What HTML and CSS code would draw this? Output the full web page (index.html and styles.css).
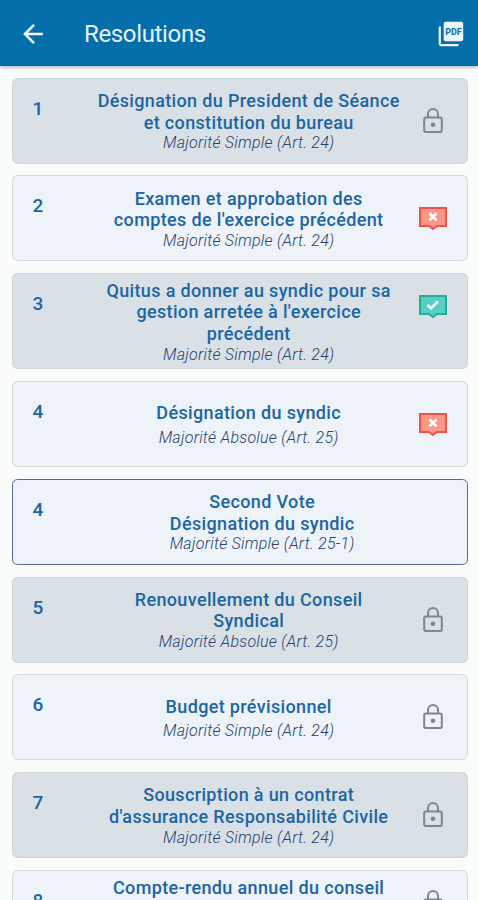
FILE: index.html
```html
<!DOCTYPE html>
<html lang="fr">
<head>
<meta charset="utf-8">
<title>Resolutions</title>
<link rel="stylesheet" href="styles.css">
</head>
<body>
<svg class="defs" aria-hidden="true">
  <symbol id="lock" viewBox="0 0 28 28">
    <rect x="5.2" y="10.4" width="17.6" height="14.6" rx="1.8" fill="none" stroke="#80878a" stroke-width="2"/>
    <path d="M9 10.400V7a5 5 0 0 1 10 0v3.400" fill="none" stroke="#80878a" stroke-width="2"/>
    <circle cx="14" cy="17.800" r="2.300" fill="#80878a"/>
  </symbol>
  <symbol id="no" viewBox="0 0 28 28">
    <path d="M0 3h28v20h-9.800L14 26.200l-4.200-3.200H0z" fill="#f4504d"/>
    <path d="M2 5h24v16h-8.500L14 23.700 10.500 21H2z" fill="#fc9785"/>
    <path d="M10.400 9.200l7.200 7.200m0-7.200l-7.200 7.200" stroke="#fff" stroke-width="2.700"/>
  </symbol>
  <symbol id="yes" viewBox="0 0 28 28">
    <path d="M0 3h28v20h-9.800L14 26.200l-4.200-3.200H0z" fill="#2aa995"/>
    <path d="M2 5h24v16h-8.500L14 23.700 10.500 21H2z" fill="#55d1c3"/>
    <path d="M8.600 13l3.500 3.300 6.900-6.900" fill="none" stroke="#fff" stroke-width="2.600"/>
  </symbol>
</svg>
<header class="bar">
  <svg class="back" viewBox="0 0 22 22"><path d="M20.800 11H3M12 1.900L2.900 11l9.100 9.100" fill="none" stroke="#f4fbff" stroke-width="2.500"/></svg>
  <h1>Resolutions</h1>
  <svg class="pdf" viewBox="0 0 26 26">
    <path d="M1.800 5.500v16.700a2 2 0 0 0 2 2h16.700" fill="none" stroke="#edf6fc" stroke-width="2.200"/>
    <rect x="5.700" y="0.800" width="19.500" height="19.500" rx="2" fill="#edf6fc"/>
    <text x="15.500" y="13.800" text-anchor="middle" textLength="16.500" lengthAdjust="spacingAndGlyphs">PDF</text>
  </svg>
</header>
<main class="list">
  <article class="card dark"><span class="num">1</span><div class="text"><h2>Désignation du President de Séance<br>et constitution du bureau</h2><p>Majorité Simple (Art. 24)</p></div><svg class="icon"><use href="#lock"/></svg></article>
  <article class="card"><span class="num">2</span><div class="text"><h2>Examen et approbation des<br>comptes de l'exercice précédent</h2><p>Majorité Simple (Art. 24)</p></div><svg class="icon"><use href="#no"/></svg></article>
  <article class="card dark tall"><span class="num">3</span><div class="text"><h2>Quitus a donner au syndic pour sa<br>gestion arretée à l'exercice<br>précédent</h2><p>Majorité Simple (Art. 24)</p></div><svg class="icon"><use href="#yes"/></svg></article>
  <article class="card single"><span class="num">4</span><div class="text"><h2>Désignation du syndic</h2><p>Majorité Absolue (Art. 25)</p></div><svg class="icon"><use href="#no"/></svg></article>
  <article class="card active"><span class="num">4</span><div class="text"><h2>Second Vote<br>Désignation du syndic</h2><p>Majorité Simple (Art. 25-1)</p></div></article>
  <article class="card dark"><span class="num">5</span><div class="text"><h2>Renouvellement du Conseil<br>Syndical</h2><p>Majorité Absolue (Art. 25)</p></div><svg class="icon"><use href="#lock"/></svg></article>
  <article class="card single"><span class="num">6</span><div class="text"><h2>Budget prévisionnel</h2><p>Majorité Simple (Art. 24)</p></div><svg class="icon"><use href="#lock"/></svg></article>
  <article class="card dark"><span class="num">7</span><div class="text"><h2>Souscription à un contrat<br>d'assurance Responsabilité Civile</h2><p>Majorité Simple (Art. 24)</p></div><svg class="icon"><use href="#lock"/></svg></article>
  <article class="card tall last"><span class="num">8</span><div class="text"><h2>Compte-rendu annuel du conseil</h2></div><svg class="icon"><use href="#lock"/></svg></article>
</main>
</body>
</html>
```
FILE: styles.css
```css
* { box-sizing: border-box; }
body {
  margin: 0;
  height: 900px;
  overflow: hidden;
  background: #fbfcfc;
  font-family: Roboto, "Liberation Sans", sans-serif;
}
h1, h2, p { margin: 0; }
.defs { display: none; }
.bar {
  height: 66px;
  display: flex;
  align-items: center;
  padding: 1px 14px 0 22px;
  background: #046eaa;
  box-shadow: 0 1px 4px rgba(0, 0, 0, .35);
}
.back { width: 22px; height: 22px; }
.bar h1 {
  flex: 1;
  margin-left: 40px;
  padding-top: 1px;
  font-size: 24px;
  font-weight: 400;
  letter-spacing: -.35px;
  color: #e2f1fb;
}
.pdf { width: 26px; height: 26px; }
.pdf text { font: 800 9px Roboto, sans-serif; fill: #1774ae; }
.list {
  height: 834px;
  overflow: hidden;
  display: flex;
  flex-direction: column;
  gap: 11.700px;
  padding: 11.700px 10.500px 0 11.800px;
}
.card {
  flex: none;
  height: 86px;
  display: flex;
  align-items: center;
  border: 1.500px solid #d5dbdc;
  border-radius: 5.500px;
  background: #edf3f9;
}
.card.dark { background: #d9e1e6; border-color: #ced7d9; }
.card.active { border-color: #536b91; }
.card.tall { height: 96.400px; }
.num {
  align-self: flex-start;
  width: 50px;
  padding-top: 19px;
  font-size: 19px;
  line-height: 22px;
  font-weight: 500;
  text-align: center;
  color: #1c65a5;
}
.text {
  flex: 1;
  padding: 1.400px 0 0 22px;
  text-align: center;
  white-space: nowrap;
}
.text h2 {
  font-size: 18px;
  line-height: 21.700px;
  font-weight: 500;
  letter-spacing: .35px;
  color: #1c65a5;
}
.text p {
  font-size: 16px;
  line-height: 19.500px;
  font-style: italic;
  font-weight: 300;
  letter-spacing: .25px;
  color: #283f70;
}
.single p { margin-top: 3.500px; }
.active .text { padding-right: 27px; }
.icon {
  width: 28px;
  height: 28px;
  margin: 0 20px 0 6px;
}
.tall .icon { align-self: flex-start; margin-top: 18px; }
.last { align-items: flex-start; }
.last .text { padding-top: 6px; }
```
